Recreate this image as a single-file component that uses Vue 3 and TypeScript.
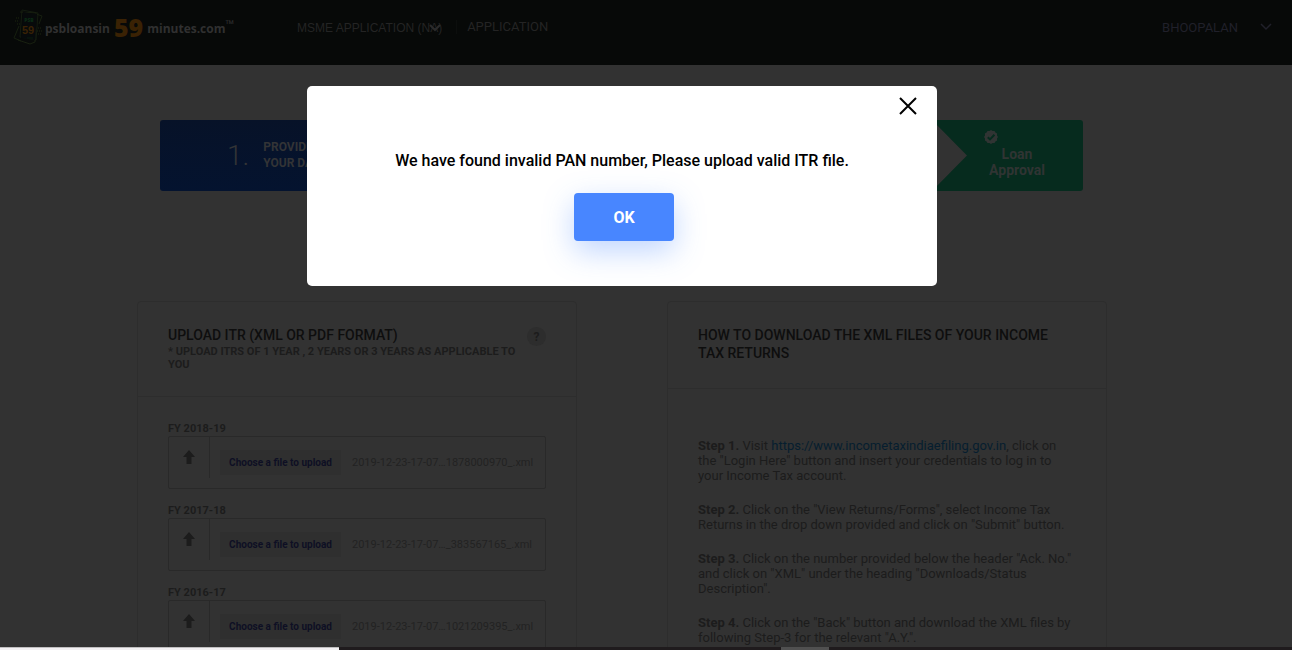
<script setup lang="ts">
import { ref } from 'vue'

interface Upload {
  id: string
  year: string
  file: string
}

interface Step {
  label: string
  before: string
  link?: string
  after?: string
}

const dialogOpen = ref(true)

const uploads: Upload[] = [
  { id: 'fy-2018', year: 'FY 2018-19', file: '2019-12-23-17-07…1878000970_.xml' },
  { id: 'fy-2017', year: 'FY 2017-18', file: '2019-12-23-17-07…_383567165_.xml' },
  { id: 'fy-2016', year: 'FY 2016-17', file: '2019-12-23-17-07…1021209395_.xml' },
]

const steps: Step[] = [
  {
    label: 'Step 1.',
    before: 'Visit ',
    link: 'https://www.incometaxindiaefiling.gov.in',
    after: ', click on the "Login Here" button and insert your credentials to log in to your Income Tax account.',
  },
  {
    label: 'Step 2.',
    before: 'Click on the "View Returns/Forms", select Income Tax Returns in the drop down provided and click on "Submit" button.',
  },
  {
    label: 'Step 3.',
    before: 'Click on the number provided below the header "Ack. No." and click on "XML" under the heading "Downloads/Status Description".',
  },
  {
    label: 'Step 4.',
    before: 'Click on the "Back" button and download the XML files by following Step-3 for the relevant "A.Y.".',
  },
]
</script>

<template>
  <div class="app">
    <header class="topbar">
      <a class="brand" href="#">
        <svg class="brand-mark" width="32" height="36" viewBox="0 0 32 36" fill="none" aria-hidden="true">
          <path d="M9 1 25 4 23 31 7 28Z" stroke="#141c10" />
          <path d="M23 5 29 7 26 15M6 17 1 29 8 32" stroke="#161f0f" />
          <path d="M7 3 23 4 22 33 17 35 5 31" stroke="#182010" />
          <path d="M3 9h4M2 12h3M4 15h3M25 19h3M24 22h5M25 25h3" stroke="#1d260f" stroke-dasharray="1 1" />
          <path d="M10 3 24 5 22 31 8 29Z" fill="#070a0b" />
          <text x="16" y="13" text-anchor="middle" class="mark-small">PSB</text>
          <text x="15" y="25" text-anchor="middle" class="mark-large">59</text>
          <path d="M14 29h6" stroke="#0a1a0e" />
        </svg>
        <span class="brand-text">psbloansin</span>
        <span class="brand-number">59</span>
        <span class="brand-text">minutes.com</span>
        <span class="brand-tm">™</span>
      </a>
      <nav class="menu">
        <a class="menu-link menu-msme" href="#">
          MSME APPLICATION (NA)
          <svg class="menu-caret" width="14" height="10" viewBox="0 0 14 10" fill="none" aria-hidden="true">
            <path d="M2 2 7 7 12 2" stroke="#2b2b2b" stroke-width="2" />
          </svg>
        </a>
        <span class="menu-divider"></span>
        <a class="menu-link" href="#">APPLICATION</a>
      </nav>
      <button class="account" type="button">
        BHOOPALAN
        <svg width="12" height="8" viewBox="0 0 12 8" fill="none" aria-hidden="true">
          <path d="M1 1 6 6 11 1" stroke="#20202a" stroke-width="1.500" />
        </svg>
      </button>
    </header>

    <main class="page">
      <div class="content">
        <section class="progress" aria-label="Progress">
          <div class="stage stage-data">
            <span class="stage-number">1.</span>
            <span class="stage-title">PROVIDE<br />YOUR DATA</span>
          </div>
          <div class="stage stage-approval">
            <svg class="badge" width="14" height="14" viewBox="0 0 14 14" aria-hidden="true">
              <path d="M7 0 8.6 1 10.5.9 11.4 2.6 13.1 3.5 13 5.4 14 7 13 8.6 13.1 10.5 11.4 11.4 10.5 13.1 8.6 13 7 14 5.4 13 3.5 13.1 2.6 11.4.9 10.5 1 8.6 0 7 1 5.4.9 3.5 2.6 2.6 3.5.9 5.4 1Z" fill="#303433" />
              <path d="M3.8 7.2 6 9.4 10.4 4.8" fill="none" stroke="#062b1e" stroke-width="2" />
            </svg>
            <span class="approval-title">Loan<br />Approval</span>
          </div>
        </section>

        <div class="cards">
          <section class="card">
            <div class="card-head upload-head">
              <div>
                <h2>UPLOAD ITR (XML OR PDF FORMAT)</h2>
                <p class="note">* UPLOAD ITRS OF 1 YEAR , 2 YEARS OR 3 YEARS AS APPLICABLE TO YOU</p>
              </div>
              <button class="help" type="button" aria-label="Help">?</button>
            </div>
            <div class="upload-body">
              <div v-for="item in uploads" :key="item.id" class="upload">
                <span :id="item.id" class="upload-year">{{ item.year }}</span>
                <div class="upload-box">
                  <span class="upload-icon">
                    <svg width="14" height="14" viewBox="0 0 14 14" aria-hidden="true">
                      <path d="M7 0 13 7H9.500V14H4.500V7H1Z" fill="#1c1c1c" />
                    </svg>
                  </span>
                  <button class="choose" type="button" :aria-describedby="item.id">Choose a file to upload</button>
                  <span class="file-name">{{ item.file }}</span>
                </div>
              </div>
            </div>
          </section>

          <section class="card">
            <div class="card-head guide-head">
              <h2>HOW TO DOWNLOAD THE XML FILES OF YOUR INCOME TAX RETURNS</h2>
            </div>
            <div class="guide-body">
              <p v-for="step in steps" :key="step.label">
                <strong>{{ step.label }}</strong>
                {{ step.before }}<a v-if="step.link" :href="step.link">{{ step.link }}</a>{{ step.after }}
              </p>
            </div>
          </section>
        </div>
      </div>
    </main>

    <div class="strip" aria-hidden="true">
      <span class="strip-light"></span>
      <span class="strip-tab"></span>
    </div>

    <div v-if="dialogOpen" class="overlay">
      <div class="dialog" role="alertdialog" aria-modal="true" aria-describedby="dialog-text">
        <button class="close" type="button" aria-label="Close" @click="dialogOpen = false">
          <svg width="18" height="18" viewBox="0 0 18 18" fill="none" aria-hidden="true">
            <path d="M1 1 17 17M17 1 1 17" stroke="#000000" stroke-width="2" />
          </svg>
        </button>
        <p id="dialog-text">We have found invalid PAN number, Please upload valid ITR file.</p>
        <button class="ok" type="button" @click="dialogOpen = false">OK</button>
      </div>
    </div>
  </div>
</template>

<style>
body {
  margin: 0;
  background: #323232;
}
</style>

<style scoped>
.app {
  display: flex;
  flex-direction: column;
  height: 100vh;
  overflow: hidden;
  background: #323232;
  color: #1c1c1c;
  font-family: Roboto, "Liberation Sans", sans-serif;
}

.app * {
  box-sizing: border-box;
}

button {
  padding: 0;
  border: 0;
  background: none;
  font-family: inherit;
  cursor: pointer;
}

a {
  text-decoration: none;
}

h2,
p {
  margin: 0;
}

.topbar {
  display: flex;
  flex: none;
  align-items: flex-start;
  height: 65px;
  padding: 0 20px 0 13px;
  background: #070908;
}

.brand {
  display: flex;
  align-items: center;
  width: 284px;
  height: 54px;
  color: #303030;
  font-family: "Open Sans", sans-serif;
  font-weight: 700;
}

.brand-text {
  padding-top: 3px;
  font-size: 12px;
}

.brand-number {
  margin: 0 4px;
  color: #3a2204;
  font-size: 25px;
  font-weight: 800;
}

.brand-tm {
  align-self: flex-start;
  padding-top: 16px;
  font-size: 11px;
}

.mark-small {
  fill: #0b2a14;
  font-size: 5px;
  font-weight: 800;
}

.mark-large {
  fill: #3a2204;
  font-family: "Liberation Sans", sans-serif;
  font-size: 11px;
  font-weight: 700;
}

.menu {
  display: flex;
  flex: 1;
  align-items: center;
  height: 54px;
}

.menu-link {
  position: relative;
  color: #242424;
  font-size: 13px;
  line-height: 16px;
}

.menu-msme {
  padding-top: 2px;
  font-family: "Liberation Sans", sans-serif;
  font-size: 12px;
}

.menu-caret {
  position: absolute;
  top: 5px;
  right: 0;
}

.menu-divider {
  width: 1px;
  height: 14px;
  margin: 0 10px 0 14px;
  background: #0c0e0d;
}

.account {
  display: flex;
  gap: 22px;
  align-items: center;
  height: 54px;
  color: #20202a;
  font-size: 13px;
}

.page {
  flex: 1;
  min-height: 0;
  padding: 55px 48px 0 0;
  overflow: hidden;
}

.content {
  max-width: 970px;
  margin: 0 auto;
}

.progress {
  display: flex;
  justify-content: space-between;
  height: 71px;
  margin: 0 24px 0 23px;
}

.stage-data {
  display: flex;
  gap: 14px;
  align-items: center;
  width: 300px;
  padding-left: 67px;
  border-radius: 3px;
  background: linear-gradient(#071228, #04132f);
  color: #333436;
}

.stage-number {
  font-size: 28px;
  font-weight: 300;
}

.stage-title {
  padding-bottom: 2px;
  font-size: 12px;
  font-weight: 700;
  line-height: 16px;
}

.stage-approval {
  width: 151px;
  padding: 10px 0 0 52px;
  border-radius: 3px;
  clip-path: polygon(0 0, 100% 0, 100% 100%, 0 100%, 35px 50%);
  background: #062b1e;
  color: #303433;
}

.badge {
  display: block;
}

.approval-title {
  display: block;
  width: 66px;
  margin-top: 2px;
  font-size: 14px;
  font-weight: 700;
  line-height: 16px;
  text-align: center;
}

.cards {
  display: grid;
  grid-template-columns: 1fr 1fr;
  gap: 90px;
  margin-top: 110px;
}

.card {
  min-height: 440px;
  border: 1px solid #2d2d2d;
  border-radius: 4px;
}

.card-head {
  padding: 24px 30px;
  border-bottom: 1px solid #2d2d2d;
}

h2 {
  color: #0e0e0e;
  font-size: 14px;
  font-weight: 500;
  line-height: 18px;
}

.upload-head {
  display: flex;
  justify-content: space-between;
  min-height: 95px;
}

.note {
  margin-top: 1px;
  color: #1c1c1c;
  font-size: 11px;
  font-weight: 700;
  line-height: 13px;
}

.help {
  flex: none;
  width: 19px;
  height: 19px;
  margin-top: 1px;
  border-radius: 50%;
  background: #2d2d2d;
  color: #1c1c1c;
  font-size: 12px;
  font-weight: 700;
}

.upload-body {
  display: grid;
  gap: 14px;
  padding: 24px 30px;
}

.upload-year {
  display: block;
  font-size: 11px;
  font-weight: 700;
  line-height: 15px;
}

.upload-box {
  display: flex;
  align-items: flex-start;
  height: 53px;
  border: 1px solid #292929;
  border-radius: 2px;
}

.upload-icon {
  display: flex;
  align-items: center;
  justify-content: center;
  width: 41px;
  height: 41px;
  padding-bottom: 2px;
  border-right: 1px solid #292929;
}

.choose {
  width: 121px;
  height: 25px;
  margin: 13px 11px 0 10px;
  background: #2f2f2f;
  color: #0e0f24;
  font-size: 10px;
  font-weight: 700;
}

.file-name {
  padding-top: 19px;
  color: #222222;
  font-size: 11px;
  line-height: 13px;
  white-space: nowrap;
}

.guide-head {
  min-height: 87px;
}

.guide-body {
  display: grid;
  gap: 19px;
  padding: 49px 30px 24px;
  font-size: 13px;
  line-height: 15px;
}

.guide-body strong {
  font-weight: 700;
}

.guide-body a {
  color: #061e2f;
}

.strip {
  display: grid;
  flex: none;
  grid-template-columns: 339fr 442fr 48fr 463fr;
  height: 3px;
  background: #1f1b1d;
}

.strip-light {
  border-top: 1px solid #c0bfc0;
  background: #f3f1f3;
}

.strip-tab {
  grid-column: 3;
  background: #505050;
}

.overlay {
  position: fixed;
  inset: 0;
  padding: 86px 48px 0 0;
}

.dialog {
  position: relative;
  display: flex;
  flex-direction: column;
  align-items: center;
  max-width: 630px;
  margin: 0 auto;
  padding: 64px 24px 45px;
  border-radius: 5px;
  background: #ffffff;
  color: #000000;
  font-size: 16px;
  font-weight: 500;
  line-height: 21px;
}

.close {
  position: absolute;
  top: 11px;
  right: 20px;
  display: flex;
}

.ok {
  width: 100px;
  height: 48px;
  margin: 22px 0 0 4px;
  border-radius: 4px;
  background: #4886ff;
  box-shadow: 0 10px 30px rgba(72, 134, 255, 0.35);
  color: #ffffff;
  font-size: 16px;
  font-weight: 700;
}
</style>
